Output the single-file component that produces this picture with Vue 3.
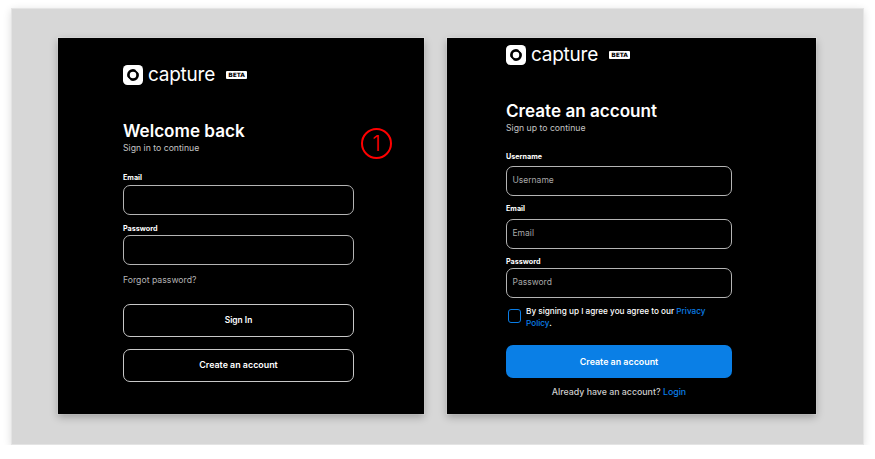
<script setup>
const brand = { name: 'capture', tag: 'BETA' }
</script>

<template>
  <main class="panel">
    <section class="card left">
      <div class="form">
        <div class="logo">
          <svg class="mark" viewBox="0 0 20 20" width="20" height="20">
            <rect width="20" height="20" rx="4.5" fill="#fff" />
            <circle cx="10" cy="10" r="4.6" fill="none" stroke="#000" stroke-width="2.7" />
            <path d="M12.6 4.4 16 7.6M4 12.4 7.4 15.6" stroke="#fff" stroke-width="1.1" />
          </svg>
          <span class="word">{{ brand.name }}</span>
          <span class="beta">{{ brand.tag }}</span>
        </div>
        <h1 class="title welcome">Welcome back</h1>
        <p class="sub">Sign in to continue</p>
        <label class="label first">Email</label>
        <div class="input"></div>
        <label class="label second">Password</label>
        <div class="input"></div>
        <a class="forgot">Forgot password?</a>
        <button class="btn signin">Sign In</button>
        <button class="btn create">Create an account</button>
      </div>
      <div class="badge"><span>1</span></div>
    </section>

    <section class="card right">
      <div class="form">
        <div class="logo">
          <svg class="mark" viewBox="0 0 20 20" width="20" height="20">
            <rect width="20" height="20" rx="4.5" fill="#fff" />
            <circle cx="10" cy="10" r="4.6" fill="none" stroke="#000" stroke-width="2.7" />
            <path d="M12.6 4.4 16 7.6M4 12.4 7.4 15.6" stroke="#fff" stroke-width="1.1" />
          </svg>
          <span class="word">{{ brand.name }}</span>
          <span class="beta">{{ brand.tag }}</span>
        </div>
        <h1 class="title account">Create an account</h1>
        <p class="sub">Sign up to continue</p>
        <label class="label r1">Username</label>
        <div class="input ph">Username</div>
        <label class="label r2">Email</label>
        <div class="input ph">Email</div>
        <label class="label r3">Password</label>
        <div class="input ph">Password</div>
        <div class="agree">
          <span class="check"></span>
          <p>By signing up I agree you agree to our <a>Privacy</a> <a>Policy</a>.</p>
        </div>
        <button class="btn primary">Create an account</button>
        <p class="already">Already have an account? <a>Login</a></p>
      </div>
    </section>
  </main>
</template>

<style>
html, body { margin: 0; background: #fff; overflow: hidden; }
</style>

<style scoped>
* { box-sizing: border-box; }
.panel {
  width: 853px;
  height: 437px;
  margin: 8px 0 0 11px;
  padding: 29px 47px 30px 46px;
  display: flex;
  gap: 23px;
  background: #d7d7d7;
  border: 1px solid #e4e4e4;
  box-shadow: 0 2px 8px rgba(0, 0, 0, .14);
  font-family: "Inter", "Liberation Sans", sans-serif;
  color: #fff;
}
.card {
  position: relative;
  height: 376px;
  background: #000;
  box-shadow: 0 3px 8px rgba(0, 0, 0, .28), 0 0 0 1px rgba(255, 255, 255, .25);
}
.left { width: 366px; padding: 27px 0 0 65px; }
.right { width: 369px; padding: 7px 0 0 59px; }
.form { width: 231px; display: flex; flex-direction: column; align-items: flex-start; }
.right .form { width: 226px; }
.logo { height: 20px; display: flex; align-items: center; }
.mark { flex: none; }
.word {
  margin-left: 5px;
  font-size: 19px;
  line-height: 20px;
  font-weight: 400;
  letter-spacing: -.25px;
  width: 69px;
}
.beta {
  margin-left: 9px;
  width: 21px;
  height: 8px;
  background: #fff;
  color: #000;
  border-radius: 1px;
  font-family: "DejaVu Sans", sans-serif;
  font-size: 6px;
  line-height: 8px;
  font-weight: 700;
  letter-spacing: -.1px;
  text-align: center;
}
.title { margin: 0; font-size: 17.1px; line-height: 20px; font-weight: 600; white-space: nowrap; }
.welcome { margin-top: 36px; }
.account { margin-top: 36px; }
.sub { margin: 1px 0 0; font-size: 8.7px; line-height: 12px; color: #c4c4c4; }
.label { font-size: 7.2px; line-height: 9px; font-weight: 700; }
.first { margin-top: 19px; margin-bottom: 3px; }
.second { margin-top: 9px; margin-bottom: 2px; }
.r1 { margin-top: 18px; margin-bottom: 5px; }
.r2 { margin-top: 8px; margin-bottom: 6px; }
.r3 { margin-top: 8px; margin-bottom: 2px; }
.input {
  width: 100%;
  height: 30px;
  border: 1px solid #b4b4b4;
  border-radius: 7px;
  font-size: 8.5px;
  line-height: 27px;
  padding-left: 5.5px;
  color: #a8a8a8;
}
.forgot { margin-top: 10px; font-size: 8.7px; line-height: 11px; color: #b5b5b5; }
.btn {
  width: 100%;
  height: 33px;
  background: transparent;
  border: 1px solid #c8c8c8;
  border-radius: 7px;
  color: #fff;
  font-family: inherit;
  font-size: 8.9px;
  font-weight: 600;
  padding: 0 0 2px;
}
.signin { margin-top: 18px; font-size: 8.4px; }
.create { margin-top: 12px; }
.agree { margin-top: 11px; padding-left: 2px; display: flex; gap: 5px; }
.check {
  flex: none;
  width: 13px;
  height: 14px;
  border: 1.5px solid #0a7de6;
  border-radius: 3px;
}
.agree p { margin: -3px 0 0; width: 190px; font-size: 8.2px; line-height: 11.5px; font-weight: 500; }
a { color: #0a7de6; }
.forgot { color: #b5b5b5; }
.primary { margin-top: 16px; background: #0a7fe6; border: 0; padding: 0 0 1px; }
.already {
  width: 100%;
  margin: 8px 0 0;
  text-align: center;
  font-size: 8.8px;
  line-height: 11px;
  font-weight: 500;
  color: #cfcfcf;
}
.badge {
  position: absolute;
  left: 303px;
  top: 90px;
  width: 31px;
  height: 31px;
  border: 2px solid #f00;
  border-radius: 50%;
  color: #f00;
  font-size: 21px;
  font-weight: 300;
  line-height: 27px;
  text-align: center;
}
</style>
